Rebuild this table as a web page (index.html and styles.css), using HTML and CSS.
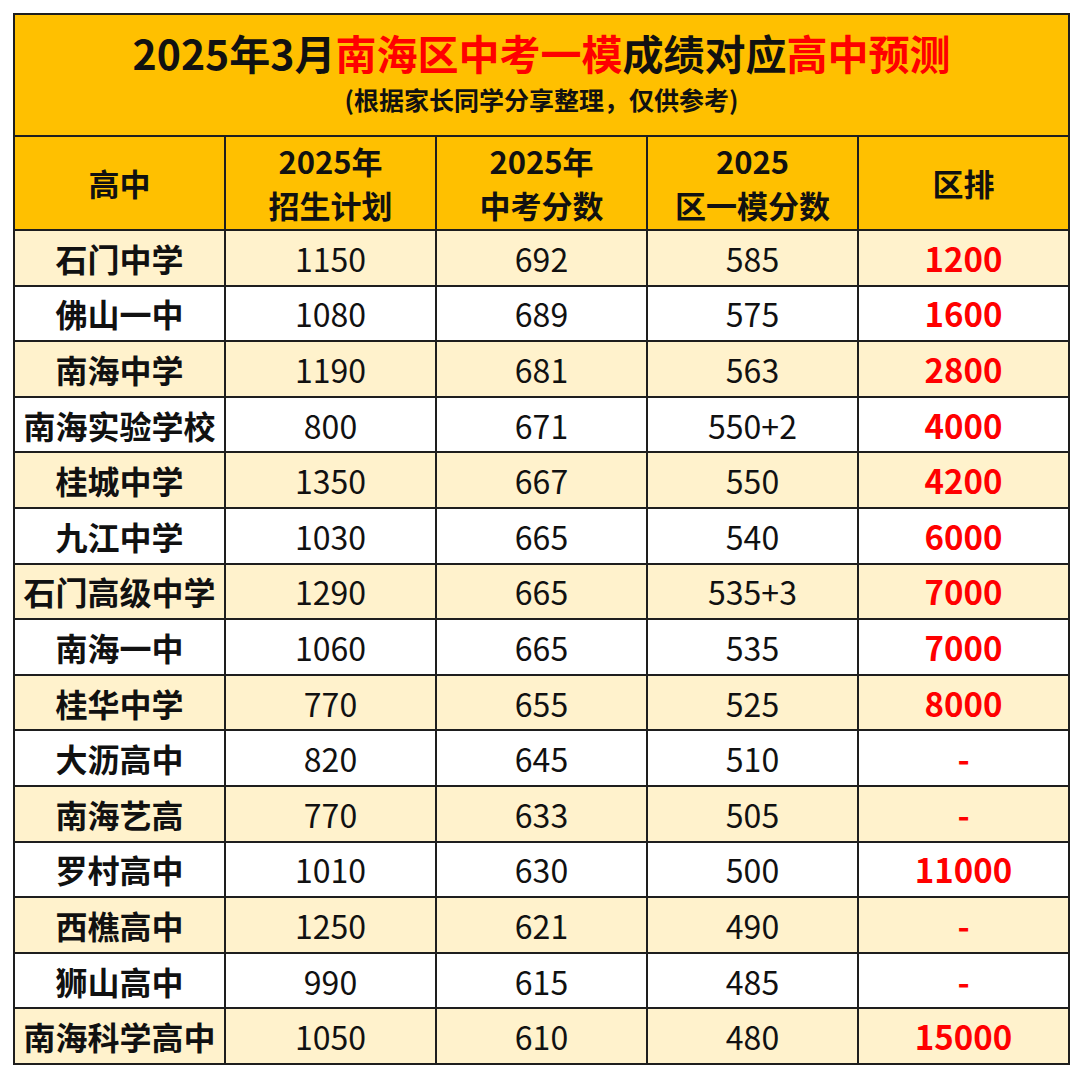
FILE: index.html
```html
<!DOCTYPE html>
<html lang="zh-CN">
<head>
<meta charset="utf-8">
<title>2025年3月南海区中考一模成绩对应高中预测</title>
<link rel="stylesheet" href="styles.css">
</head>
<body>
<table class="sheet">
  <colgroup>
    <col class="c"><col class="c"><col class="c"><col class="c"><col class="c">
  </colgroup>
  <thead>
    <tr class="title-row">
      <th colspan="5">
        <div class="title">2025年3月<span class="red">南海区中考一模</span>成绩对应<span class="red">高中预测</span></div>
        <div class="subtitle">(根据家长同学分享整理，仅供参考)</div>
      </th>
    </tr>
    <tr class="head-row">
      <th>高中</th>
      <th>2025年<br>招生计划</th>
      <th>2025年<br>中考分数</th>
      <th>2025<br>区一模分数</th>
      <th>区排</th>
    </tr>
  </thead>
  <tbody>
    <tr class="alt"><td class="name">石门中学</td><td>1150</td><td>692</td><td>585</td><td class="rank">1200</td></tr>
    <tr><td class="name">佛山一中</td><td>1080</td><td>689</td><td>575</td><td class="rank">1600</td></tr>
    <tr class="alt"><td class="name">南海中学</td><td>1190</td><td>681</td><td>563</td><td class="rank">2800</td></tr>
    <tr><td class="name">南海实验学校</td><td>800</td><td>671</td><td>550+2</td><td class="rank">4000</td></tr>
    <tr class="alt"><td class="name">桂城中学</td><td>1350</td><td>667</td><td>550</td><td class="rank">4200</td></tr>
    <tr><td class="name">九江中学</td><td>1030</td><td>665</td><td>540</td><td class="rank">6000</td></tr>
    <tr class="alt"><td class="name">石门高级中学</td><td>1290</td><td>665</td><td>535+3</td><td class="rank">7000</td></tr>
    <tr><td class="name">南海一中</td><td>1060</td><td>665</td><td>535</td><td class="rank">7000</td></tr>
    <tr class="alt"><td class="name">桂华中学</td><td>770</td><td>655</td><td>525</td><td class="rank">8000</td></tr>
    <tr><td class="name">大沥高中</td><td>820</td><td>645</td><td>510</td><td class="rank">-</td></tr>
    <tr class="alt"><td class="name">南海艺高</td><td>770</td><td>633</td><td>505</td><td class="rank">-</td></tr>
    <tr><td class="name">罗村高中</td><td>1010</td><td>630</td><td>500</td><td class="rank">11000</td></tr>
    <tr class="alt"><td class="name">西樵高中</td><td>1250</td><td>621</td><td>490</td><td class="rank">-</td></tr>
    <tr><td class="name">狮山高中</td><td>990</td><td>615</td><td>485</td><td class="rank">-</td></tr>
    <tr class="alt"><td class="name">南海科学高中</td><td>1050</td><td>610</td><td>480</td><td class="rank">15000</td></tr>
  </tbody>
</table>
</body>
</html>
```

FILE: styles.css
```css
html, body {
  margin: 0;
  padding: 0;
  background: #ffffff;
}

body {
  padding: 13px 0 0 13px;
  font-family: "Noto Sans CJK SC", "Noto Sans", sans-serif;
  color: #111111;
}

.sheet {
  border-collapse: collapse;
  table-layout: fixed;
  width: 1054px;
  border: 2px solid #1e1e1e;
}

.sheet .c {
  width: 211px;
}

.sheet th,
.sheet td {
  border: 2px solid #1e1e1e;
  padding: 0;
  text-align: center;
  vertical-align: middle;
}

.title-row th {
  height: 120px;
  background: #ffc000;
}

.title {
  font-size: 41px;
  font-weight: 700;
  line-height: 50px;
  color: #111111;
  margin-top: -8px;
}

.red {
  color: #ff0000;
}

.subtitle {
  font-size: 25px;
  font-weight: 700;
  line-height: 32px;
  margin-top: 6px;
  color: #111111;
}

.head-row th {
  height: 92px;
  background: #ffc000;
  font-size: 31px;
  font-weight: 700;
  line-height: 44px;
  color: #111111;
}

tbody tr {
  background: #ffffff;
}

tbody tr.alt {
  background: #fff2cc;
}

tbody td {
  height: 53.6px;
  padding-bottom: 3px;
  font-size: 32px;
  line-height: 36px;
  font-weight: 400;
  color: #111111;
}

tbody td.name {
  font-weight: 700;
}

tbody td.rank {
  font-size: 33px;
  font-weight: 700;
  color: #ff0000;
}
```
